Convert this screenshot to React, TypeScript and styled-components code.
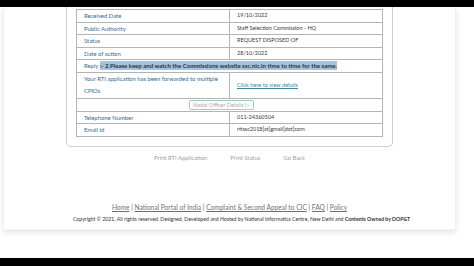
import styled, { createGlobalStyle } from "styled-components";

//css
const GlobalStyle = createGlobalStyle`
  html, body {
    margin: 0;
    padding: 0;
    background: #000;
  }
  body {
    font-family: Lato, "Open Sans", sans-serif;
  }
`;
const Screen = styled.div`
  width: 474px;
  height: 266px;
  display: flex;
  flex-direction: column;
  background: #000;
`;
const Page = styled.div`
  margin: 7px 0 8px;
  flex: 1;
  background: #fff;
  overflow: hidden;
`;
const Card = styled.div`
  width: 453px;
  height: 223px;
  margin-left: 3px;
  background: #fff;
  box-sizing: border-box;
  border: 1px solid #f1f1f1;
  border-top: none;
  box-shadow: 0 3px 6px rgba(0, 0, 0, 0.1);
  display: flex;
  flex-direction: column;
  align-items: center;
`;
const Panel = styled.div`
  width: 327px;
  box-sizing: border-box;
  padding: 2px 9px 9px;
  border: 1px solid #cfcfcf;
  border-top: none;
  border-radius: 0 0 5px 5px;
`;
const Table = styled.table`
  width: 100%;
  border-collapse: collapse;
  border: 1px solid #a9a9a9;
  td {
    border: 1px solid #b4b4b4;
    padding: 0 7px;
    height: 11.5px;
    line-height: 11.5px;
    width: 50%;
    vertical-align: middle;
  }
`;
const Label = styled.td<{ $tall?: boolean }>`
  color: #2f6a96;
  font-size: 5.9px;
  && {
    line-height: ${p => (p.$tall ? "12.6px" : "11.5px")};
  }
`;
const Value = styled.td`
  color: #3a3a3a;
  font-size: 5.5px;
`;
const ReplyCell = styled.td`
  color: #2f6a96;
  font-size: 5.9px;
`;
const Selected = styled.span`
  background: #a7c3da;
  color: #1d3550;
  font-weight: 700;
  font-size: 6.05px;
  padding: 1px 0;
`;
const ViewLink = styled.a`
  color: #3b8aa2;
  font-size: 5.6px;
  text-decoration: underline;
`;
const NodalCell = styled.td`
  text-align: center;
  && {
    padding: 0 16px 0 0;
    height: 12px;
    line-height: 8px;
  }
`;
const NodalButton = styled.span`
  display: inline-block;
  vertical-align: middle;
  border: 1px solid #a8c9cc;
  border-radius: 2px;
  padding: 0 3px;
  line-height: 8px;
  font-size: 5.5px;
  color: #a9a9a9;
  background: #fff;
`;
const Actions = styled.div`
  display: flex;
  gap: 23px;
  margin-top: 7px;
  font-size: 5.9px;
  color: #a0a0a0;
  line-height: 8px;
`;
const Footer = styled.div`
  margin-top: auto;
  margin-bottom: 6px;
  width: 100%;
  text-align: center;
`;
const Links = styled.div`
  font-size: 6.6px;
  color: #666;
  line-height: 8px;
  margin-bottom: 4px;
  a {
    color: #707070;
    text-decoration: underline;
  }
`;
const Copyright = styled.div`
  font-size: 5.2px;
  color: #333;
  line-height: 8px;
  padding-left: 24px;
  b {
    font-weight: 700;
  }
`;

function App() {
  const rows = [
    ["Received Date", "19/10/2022"],
    ["Public Authority", "Staff Selection Commission - HQ"],
    ["Status", "REQUEST DISPOSED OF"],
    ["Date of action", "28/10/2022"],
  ];
  return (
    <>
      <GlobalStyle />
      <Screen>
        <Page>
          <Card>
            <Panel>
              <Table>
                <tbody>
                  {rows.map(([k, v]) => (
                    <tr key={k}>
                      <Label>{k}</Label>
                      <Value>{v}</Value>
                    </tr>
                  ))}
                  <tr>
                    <ReplyCell colSpan={2}>
                      Reply <Selected>:- 2.Please keep and watch the Commissions website ssc.nic.in time to time for the same.</Selected>
                    </ReplyCell>
                  </tr>
                  <tr>
                    <Label $tall>Your RTI application has been forwarded to multiple CPIOs</Label>
                    <Value>
                      <ViewLink>Click here to view details</ViewLink>
                    </Value>
                  </tr>
                  <tr>
                    <NodalCell colSpan={2}>
                      <NodalButton>Nodal Officer Details ▷</NodalButton>
                    </NodalCell>
                  </tr>
                  <tr>
                    <Label>Telephone Number</Label>
                    <Value>011-24360504</Value>
                  </tr>
                  <tr>
                    <Label>Email Id</Label>
                    <Value>rtissc2018[at]gmail[dot]com</Value>
                  </tr>
                </tbody>
              </Table>
            </Panel>
            <Actions>
              <span>Print RTI Application</span>
              <span>Print Status</span>
              <span>Go Back</span>
            </Actions>
            <Footer>
              <Links>
                <a>Home</a> | <a>National Portal of India</a> | <a>Complaint &amp; Second Appeal to CIC</a> | <a>FAQ</a> | <a>Policy</a>
              </Links>
              <Copyright>
                Copyright © 2021. All rights reserved. Designed, Developed and Hosted by National Informatics Centre, New Delhi and <b>Contents Owned by DOP&amp;T</b>
              </Copyright>
            </Footer>
          </Card>
        </Page>
      </Screen>
    </>
  );
}

export default App;
